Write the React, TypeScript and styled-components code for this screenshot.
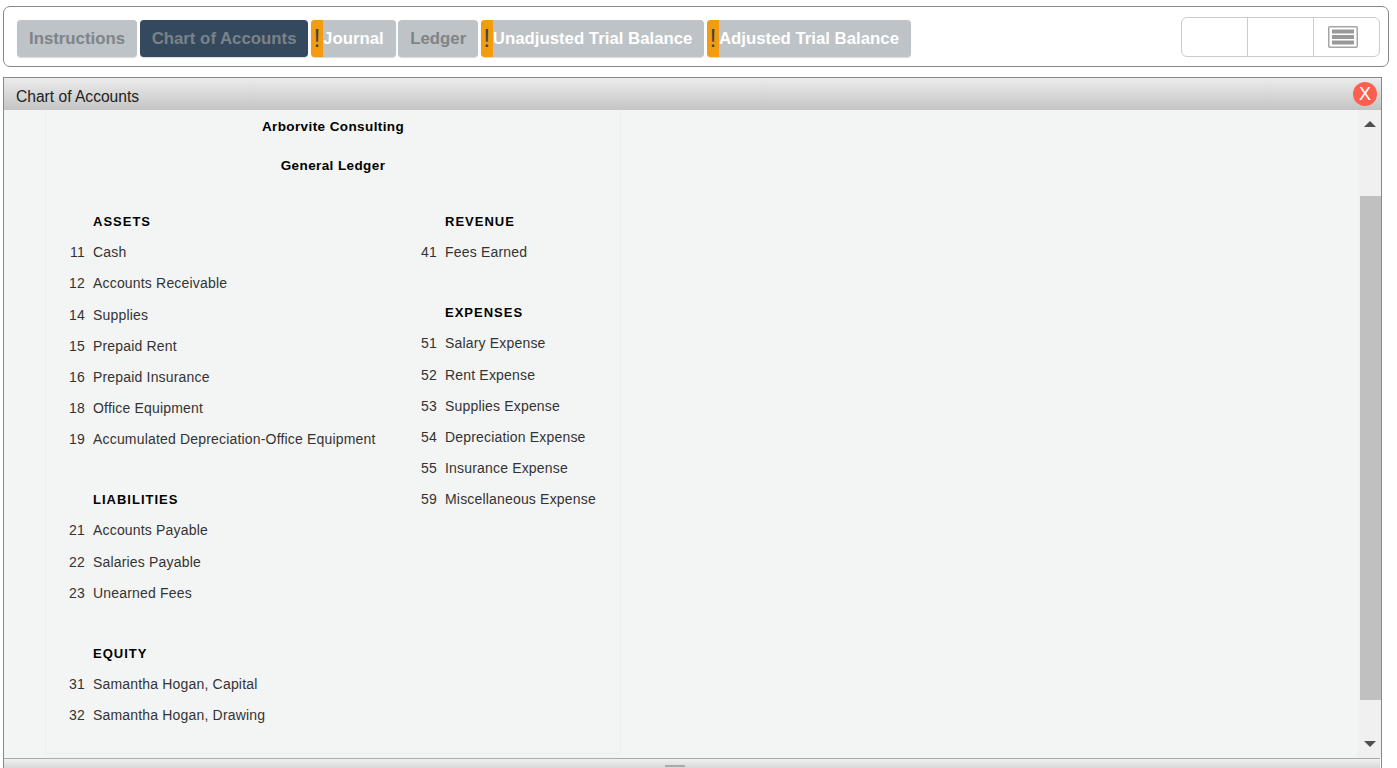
import React from 'react';
import styled, { createGlobalStyle } from 'styled-components';

const GlobalStyle = createGlobalStyle`
  html, body {
    margin: 0;
    padding: 0;
    height: 768px;
    overflow: hidden;
    background: #fff;
    font-family: "Liberation Sans", Arial, sans-serif;
  }
`;

const Page = styled.div`
  display: flex;
  flex-direction: column;
  height: 768px;
  padding: 6px 8px 0 3px;
  box-sizing: border-box;
  overflow: hidden;
`;

const Toolbar = styled.div`
  display: flex;
  flex: none;
  justify-content: space-between;
  align-items: flex-start;
  height: 61px;
  box-sizing: border-box;
  padding: 13px 8px 0 13px;
  border: 1px solid #888;
  border-radius: 7px;
`;

const Tabs = styled.div`
  display: flex;
  gap: 2.6px;
`;

const Tab = styled.button<{ $active?: boolean; $alert?: boolean }>`
  display: flex;
  align-items: stretch;
  height: 37px;
  margin: 0;
  padding: 0 12px 0 ${({ $alert }) => ($alert ? 0 : 12)}px;
  border: none;
  border-radius: 4px;
  overflow: hidden;
  font-family: inherit;
  font-size: 16.8px;
  font-weight: bold;
  line-height: 38px;
  cursor: pointer;
  box-shadow: 0 1px 1px rgba(0, 0, 0, 0.15);
  background: ${({ $active }) => ($active ? '#34495e' : '#bdc3c7')};
  color: ${({ $active, $alert }) =>
    $alert ? '#fff' : $active ? '#7b8287' : '#7f8487'};
`;

const AlertMark = styled.span`
  width: 12px;
  flex: none;
  background: #f39c12;
  color: #444;
  font-size: 25px;
  font-weight: normal;
  line-height: 36px;
  text-align: center;
`;

const ViewGroup = styled.div`
  display: flex;
  height: 40px;
  margin-top: -3px;
  box-sizing: border-box;
  border: 1px solid #ccc;
  border-radius: 6px;
`;

const ViewButton = styled.div`
  display: flex;
  align-items: center;
  justify-content: center;
  width: 58px;
  padding-right: 7px;
  & + & {
    border-left: 1px solid #ccc;
  }
`;

const Panel = styled.div`
  display: flex;
  flex: 1;
  flex-direction: column;
  min-height: 0;
  width: 1379px;
  margin-top: 10px;
  box-sizing: border-box;
  border: 1px solid #888;
  border-bottom: none;
`;

const PanelHeader = styled.div`
  display: flex;
  flex: none;
  align-items: center;
  justify-content: space-between;
  height: 32px;
  padding: 5px 4px 0 12px;
  box-sizing: border-box;
  background: linear-gradient(#ececec, #c4c4c4);
  font-size: 15.6px;
  color: #222;
`;

const CloseButton = styled.div`
  width: 24px;
  height: 24px;
  margin-top: -5px;
  border-radius: 50%;
  background: #fb5f4f;
  color: #fff;
  font-size: 18px;
  line-height: 24px;
  text-align: center;
`;

const PanelBody = styled.div`
  display: flex;
  flex: none;
  height: 648px;
  background: #f3f5f4;
`;

const Content = styled.div`
  flex: 1;
  padding-left: 41px;
`;

const Sheet = styled.div`
  width: 576px;
  height: 644px;
  box-sizing: border-box;
  border: 1px solid #eceeed;
  border-top: none;
  color: #333;
`;

const SheetTitle = styled.div`
  height: 39px;
  padding-top: 8px;
  box-sizing: border-box;
  font-size: 13.5px;
  font-weight: bold;
  line-height: 17px;
  letter-spacing: 0.4px;
  text-align: center;
  color: #000;
`;

const Columns = styled.div`
  display: flex;
  padding-top: 17.4px;
`;

const LeftColumn = styled.div`
  width: 352px;
  flex: none;
`;

const RightColumn = styled.div`
  flex: 1;
`;

const Group = styled.div`
  margin-bottom: 28.8px;
`;

const Row = styled.div`
  display: flex;
  height: 31.2px;
  align-items: center;
  font-size: 14px;
  letter-spacing: 0.18px;
  white-space: nowrap;
`;

const Num = styled.span`
  width: 39px;
  flex: none;
  text-align: right;
  margin-right: 8px;
`;

const Heading = styled(Row)`
  padding: 1px 0 0 47px;
  box-sizing: border-box;
  font-size: 13px;
  font-weight: bold;
  letter-spacing: 1px;
  color: #000;
`;

const Scrollbar = styled.div`
  display: flex;
  flex: none;
  flex-direction: column;
  width: 23px;
  background: #f0f0f0;
`;

const ArrowSlot = styled.div<{ $down?: boolean }>`
  display: flex;
  justify-content: flex-end;
  flex: ${({ $down }) => ($down ? 1 : 'none')};
  align-items: ${({ $down }) => ($down ? 'flex-end' : 'flex-start')};
  height: ${({ $down }) => ($down ? 'auto' : '86px')};
  padding: ${({ $down }) => ($down ? '0 5px 11px 0' : '11px 5px 0 0')};
  box-sizing: border-box;
`;

const Arrow = styled.div<{ $down?: boolean }>`
  width: 0;
  height: 0;
  border-left: 6px solid transparent;
  border-right: 6px solid transparent;
  ${({ $down }) =>
    $down ? 'border-top: 6px solid #505050;' : 'border-bottom: 6px solid #505050;'}
`;

const Thumb = styled.div`
  flex: none;
  height: 504px;
  margin-left: 2px;
  background: #c0c0c0;
`;

const PanelFooter = styled.div`
  display: flex;
  flex: 1;
  justify-content: center;
  min-height: 0;
  margin-right: 1px;
  padding: 6px 34px 0 0;
  border-top: 1px solid #aaa;
  background: linear-gradient(#f0f0f0, #d8d8d8);
`;

const Grip = styled.div`
  width: 20px;
  height: 2px;
  background: #aaa;
`;

const ListIcon = () => (
  <svg width="30" height="22" viewBox="0 0 30 22">
    <rect x="0.75" y="0.75" width="28.5" height="20.5" rx="1" fill="#fff" stroke="#a5a5a5" strokeWidth="1.5" />
    <rect x="4" y="3.5" width="22" height="4" fill="#999" />
    <rect x="4" y="9" width="22" height="4" fill="#999" />
    <rect x="4" y="14.5" width="22" height="4" fill="#999" />
  </svg>
);

type Account = [string, string];
type AccountGroup = { title: string; accounts: Account[] };

const leftGroups: AccountGroup[] = [
  {
    title: 'ASSETS',
    accounts: [
      ['11', 'Cash'],
      ['12', 'Accounts Receivable'],
      ['14', 'Supplies'],
      ['15', 'Prepaid Rent'],
      ['16', 'Prepaid Insurance'],
      ['18', 'Office Equipment'],
      ['19', 'Accumulated Depreciation-Office Equipment'],
    ],
  },
  {
    title: 'LIABILITIES',
    accounts: [
      ['21', 'Accounts Payable'],
      ['22', 'Salaries Payable'],
      ['23', 'Unearned Fees'],
    ],
  },
  {
    title: 'EQUITY',
    accounts: [
      ['31', 'Samantha Hogan, Capital'],
      ['32', 'Samantha Hogan, Drawing'],
    ],
  },
];

const rightGroups: AccountGroup[] = [
  { title: 'REVENUE', accounts: [['41', 'Fees Earned']] },
  {
    title: 'EXPENSES',
    accounts: [
      ['51', 'Salary Expense'],
      ['52', 'Rent Expense'],
      ['53', 'Supplies Expense'],
      ['54', 'Depreciation Expense'],
      ['55', 'Insurance Expense'],
      ['59', 'Miscellaneous Expense'],
    ],
  },
];

const tabs = [
  { label: 'Instructions' },
  { label: 'Chart of Accounts', active: true },
  { label: 'Journal', alert: true },
  { label: 'Ledger' },
  { label: 'Unadjusted Trial Balance', alert: true },
  { label: 'Adjusted Trial Balance', alert: true },
];

const renderGroups = (groups: AccountGroup[]) =>
  groups.map((group) => (
    <Group key={group.title}>
      <Heading>{group.title}</Heading>
      {group.accounts.map(([num, name]) => (
        <Row key={num}>
          <Num>{num}</Num>
          {name}
        </Row>
      ))}
    </Group>
  ));

export default function App() {
  return (
    <Page>
      <GlobalStyle />
      <Toolbar>
        <Tabs>
          {tabs.map((tab) => (
            <Tab key={tab.label} $active={tab.active} $alert={tab.alert}>
              {tab.alert && <AlertMark>!</AlertMark>}
              {tab.label}
            </Tab>
          ))}
        </Tabs>
        <ViewGroup>
          <ViewButton />
          <ViewButton />
          <ViewButton>
            <ListIcon />
          </ViewButton>
        </ViewGroup>
      </Toolbar>
      <Panel>
        <PanelHeader>
          Chart of Accounts
          <CloseButton>X</CloseButton>
        </PanelHeader>
        <PanelBody>
          <Content>
            <Sheet>
              <SheetTitle>Arborvite Consulting</SheetTitle>
              <SheetTitle>General Ledger</SheetTitle>
              <Columns>
                <LeftColumn>{renderGroups(leftGroups)}</LeftColumn>
                <RightColumn>{renderGroups(rightGroups)}</RightColumn>
              </Columns>
            </Sheet>
          </Content>
          <Scrollbar>
            <ArrowSlot>
              <Arrow />
            </ArrowSlot>
            <Thumb />
            <ArrowSlot $down>
              <Arrow $down />
            </ArrowSlot>
          </Scrollbar>
        </PanelBody>
        <PanelFooter>
          <Grip />
        </PanelFooter>
      </Panel>
    </Page>
  );
}
